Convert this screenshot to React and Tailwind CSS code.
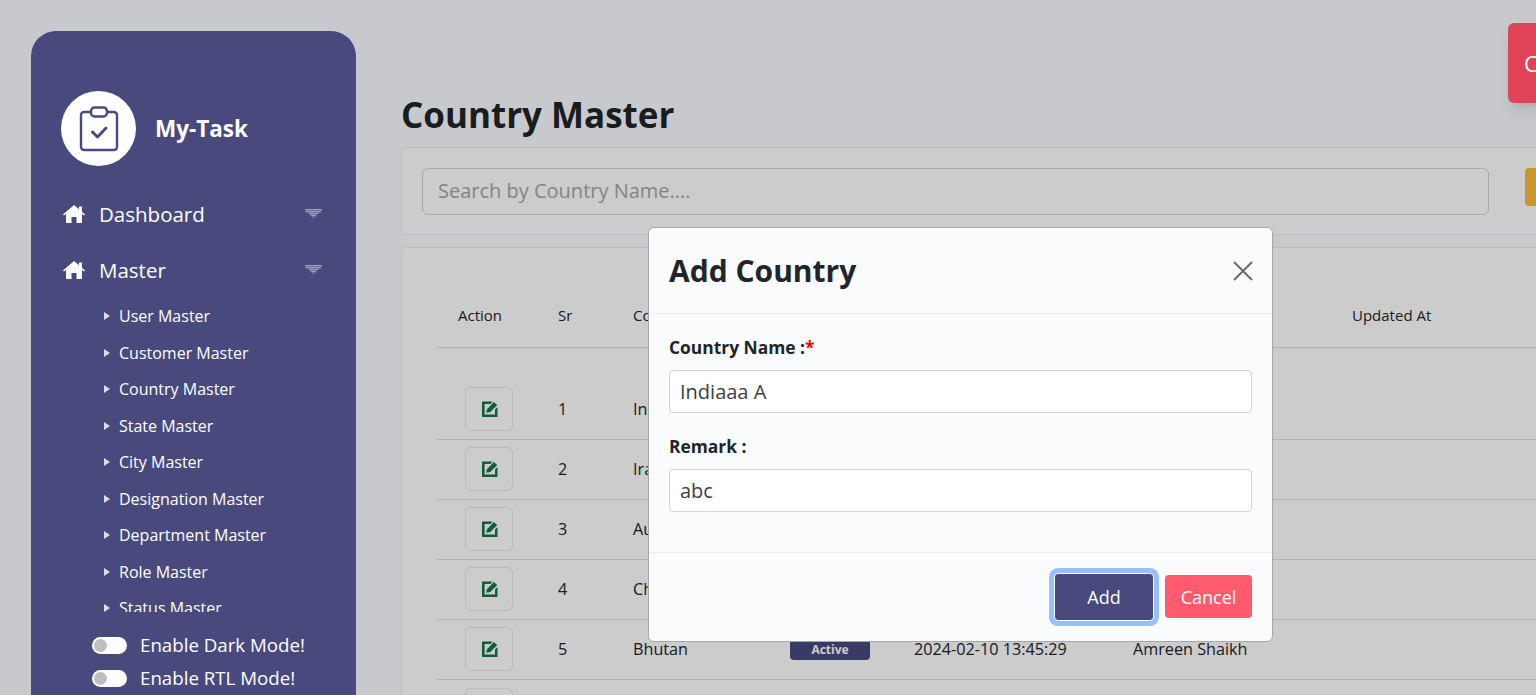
import { Fragment } from "react";

const subItems = [
  "User Master",
  "Customer Master",
  "Country Master",
  "State Master",
  "City Master",
  "Designation Master",
  "Department Master",
  "Role Master",
  "Status Master",
];

const rows = [
  { sr: 1, name: "India" },
  { sr: 2, name: "Iran" },
  { sr: 3, name: "Australia" },
  { sr: 4, name: "China" },
  { sr: 5, name: "Bhutan" },
];

function ClipboardLogo() {
  return (
    <svg width="40" height="46" viewBox="0 0 40 46" fill="none" stroke="#484a7d" strokeWidth="2.4" strokeLinecap="round" strokeLinejoin="round">
      <path d="M11 6H5a3 3 0 0 0-3 3v32a3 3 0 0 0 3 3h30a3 3 0 0 0 3-3V9a3 3 0 0 0-3-3h-6" />
      <rect x="12" y="1.5" width="16" height="9" rx="3.5" />
      <path d="M13.5 26l5 5 8.5-9" strokeWidth="2.8" />
    </svg>
  );
}

function HomeIcon() {
  return (
    <svg width="22" height="18" viewBox="0 0 22 18" fill="#ffffff" className="shrink-0">
      <path d="M11 0l5 4.2V1.5h3v5.2L22 9.4l-1 1.1-2-1.6V18h-5.5v-6h-5v6H3V8.9l-2 1.6-1-1.1z" />
    </svg>
  );
}

// dotted triangle used as the dropdown caret
function DottedCaret() {
  const lines = [
    [0, 17],
    [1, 15],
    [4, 9],
    [6, 5],
    [8, 1],
  ];
  return (
    <svg width="18" height="10" viewBox="0 0 18 10" className="opacity-60">
      {lines.map(([x, n], i) => (
        <Fragment key={i}>
          {Array.from({ length: n }, (_, k) => (
            <rect key={k} x={x + k} y={i * 2} width="0.8" height="1.4" fill="#ffffff" />
          ))}
        </Fragment>
      ))}
    </svg>
  );
}

function EditIcon() {
  return (
    <svg width="16" height="16" viewBox="0 0 16 16" className="ml-[1px]">
      <path d="M0 0.5h10.5L8.4 3H2.6v10.4H13V8.4l2.5-2.5V16H0z" fill="#157347" />
      <path d="M4.2 11.8l.8-3.6L11.8 1l3.4 3-6.9 7z" fill="#157347" />
    </svg>
  );
}

function NavItem({ label }) {
  return (
    <div className="flex items-center h-[56px]">
      <HomeIcon />
      <span className="ml-[14px] text-[20.5px] text-white">{label}</span>
      <span className="ml-auto mr-[1px] flex">
        <DottedCaret />
      </span>
    </div>
  );
}

function Toggle({ label }) {
  return (
    <div className="flex items-center h-[33px] pl-[61px]">
      <span className="w-[35px] h-[17px] rounded-full bg-white flex items-center pl-[2px]">
        <span className="w-[13px] h-[13px] rounded-full bg-[#bfbfbf]" />
      </span>
      <span className="ml-[13px] text-[18.7px] text-white whitespace-nowrap">{label}</span>
    </div>
  );
}

function Sidebar() {
  return (
    <aside className="relative z-20 shrink-0 w-[325px] h-[700px] mt-[31px] ml-[31px] rounded-[25px] bg-[#484a7d] flex flex-col">
      <div className="flex items-center pt-[60px] pl-[30px]">
        <div className="w-[75px] h-[75px] rounded-full bg-white flex items-center justify-center">
          <ClipboardLogo />
        </div>
        <span className="ml-[19px] text-[22.5px] font-bold text-white">My-Task</span>
      </div>
      <nav className="mt-[20px] px-[32px] h-[426px] overflow-hidden">
        <NavItem label="Dashboard" />
        <NavItem label="Master" />
        <ul className="pl-[41px]">
          {subItems.map((s) => (
            <li key={s} className="flex items-center h-[36.5px] text-[16px] text-white">
              <span className="w-0 h-0 border-y-[4px] border-y-transparent border-l-[6px] border-l-[#dddde8] mr-[9px]" />
              {s}
            </li>
          ))}
        </ul>
      </nav>
      <div className="mt-[17px]">
        <Toggle label="Enable Dark Mode!" />
        <Toggle label="Enable RTL Mode!" />
      </div>
    </aside>
  );
}

function TableCard() {
  const cols = "grid grid-cols-[100px_75px_157px_124px_219px_219px_200px] items-center";
  return (
    <div className="mt-[12px] w-[1200px] h-[600px] bg-white border border-[#ebedf0] rounded-[4px] pt-[34px] pl-[35px]">
      <div className={`${cols} h-[66px] pt-[2px] pl-[21px] border-b border-[#d9dadb] text-[15px] text-[#212529]`}>
        <span>Action</span>
        <span>Sr</span>
        <span>Country</span>
        <span>Status</span>
        <span>Created At</span>
        <span>Created By</span>
        <span>Updated At</span>
      </div>
      <div>
        {rows.map((r, i) => (
          <div
            key={r.sr}
            className={`${cols} pl-[21px] border-b border-[#dfe0e1] text-[16.2px] text-[#212529] ${i === 0 ? "h-[92px] pt-[32px]" : "h-[60px]"}`}
          >
            <span className="ml-[7px] mt-[-1px] w-[48px] h-[44px] rounded-[6px] border border-[#e8e9ea] flex items-center justify-center">
              <EditIcon />
            </span>
            <span>{r.sr}</span>
            <span>{r.name}</span>
            <span className="w-[80px] h-[21px] rounded-[4px] bg-[#484a7d] text-white text-[12px] font-bold flex items-center justify-center">
              Active
            </span>
            <span>2024-02-10 13:45:29</span>
            <span>Amreen Shaikh</span>
            <span />
          </div>
        ))}
        <div className={`${cols} h-[60px] pl-[21px]`}>
          <span className="ml-[7px] mt-[-1px] w-[48px] h-[44px] rounded-[6px] border border-[#e8e9ea]" />
        </div>
      </div>
    </div>
  );
}

function Modal() {
  return (
    <div className="absolute z-30 left-[648px] top-[227px] w-[625px] h-[415px] rounded-[6px] bg-[#f9fbfd] border border-[#a6a7a9] flex flex-col text-[#212529]">
      <div className="h-[86px] pl-[20px] pr-[19px] flex items-center justify-between border-b border-[#eceef0]">
        <h2 className="text-[30px] font-bold leading-none">Add Country</h2>
        <svg width="20" height="20" viewBox="0 0 20 20" stroke="#6a6c6e" strokeWidth="2">
          <path d="M1 1l18 18M19 1L1 19" />
        </svg>
      </div>
      <div className="flex-1 pl-[20px] pr-[20px] pt-[21px]">
        <label className="block text-[17.4px] font-bold leading-[24px]">
          Country Name :<span className="text-[#ff0000]">*</span>
        </label>
        <div className="mt-[11px] h-[43px] rounded-[4px] border border-[#ced4da] bg-white flex items-center px-[10px] text-[20px] text-[#3c4043]">
          Indiaaa A
        </div>
        <label className="block mt-[21px] text-[17.4px] font-bold leading-[24px]">Remark :</label>
        <div className="mt-[11px] h-[43px] rounded-[4px] border border-[#ced4da] bg-white flex items-center px-[10px] text-[20px] text-[#3c4043]">
          abc
        </div>
      </div>
      <div className="h-[89px] px-[20px] border-t border-[#eceef0] flex items-start justify-end gap-[11px] pt-[22px]">
        <button className="w-[100px] h-[48px] mt-[-2px] rounded-[4px] bg-[#484a7d] border border-white ring-[5px] ring-[#98c1fb] text-white text-[18px]">
          Add
        </button>
        <button className="w-[87px] h-[43px] rounded-[4px] bg-[#ff5b6e] pt-[1px] text-white text-[18px]">Cancel</button>
      </div>
    </div>
  );
}

export default function App() {
  return (
    <div className="relative w-[1536px] h-[695px] overflow-hidden bg-[#fbfcff] flex font-['Open_Sans',sans-serif]">
      <Sidebar />

      <main className="ml-[45px] flex-1 min-w-0">
        <h1 className="mt-[91px] text-[35px] leading-[48px] font-bold text-[#212529] whitespace-nowrap">Country Master</h1>
        <div className="mt-[8px] w-[1200px] h-[88px] bg-white border border-[#ebedf0] rounded-[4px] flex items-center pl-[20px]">
          <div className="w-[1067px] h-[47px] rounded-[6px] border border-[#ced4da] flex items-center px-[15px] text-[20px] text-[#a3a6a9]">
            Search by Country Name....
          </div>
          <div className="ml-[36px] mb-[9px] w-[60px] h-[38px] rounded-[4px] bg-[#fbbc35]" />
        </div>
        <TableCard />
      </main>

      {/* backdrop, sidebar and toast stay above it */}
      <div className="absolute inset-0 z-10 bg-black/20" />
      <Modal />
      <div className="absolute z-20 left-[1508px] top-[23px] w-[60px] h-[80px] rounded-[6px] bg-[#e04459] shadow-lg flex items-center pl-[16px] text-white text-[22px]">
        Close
      </div>
    </div>
  );
}
